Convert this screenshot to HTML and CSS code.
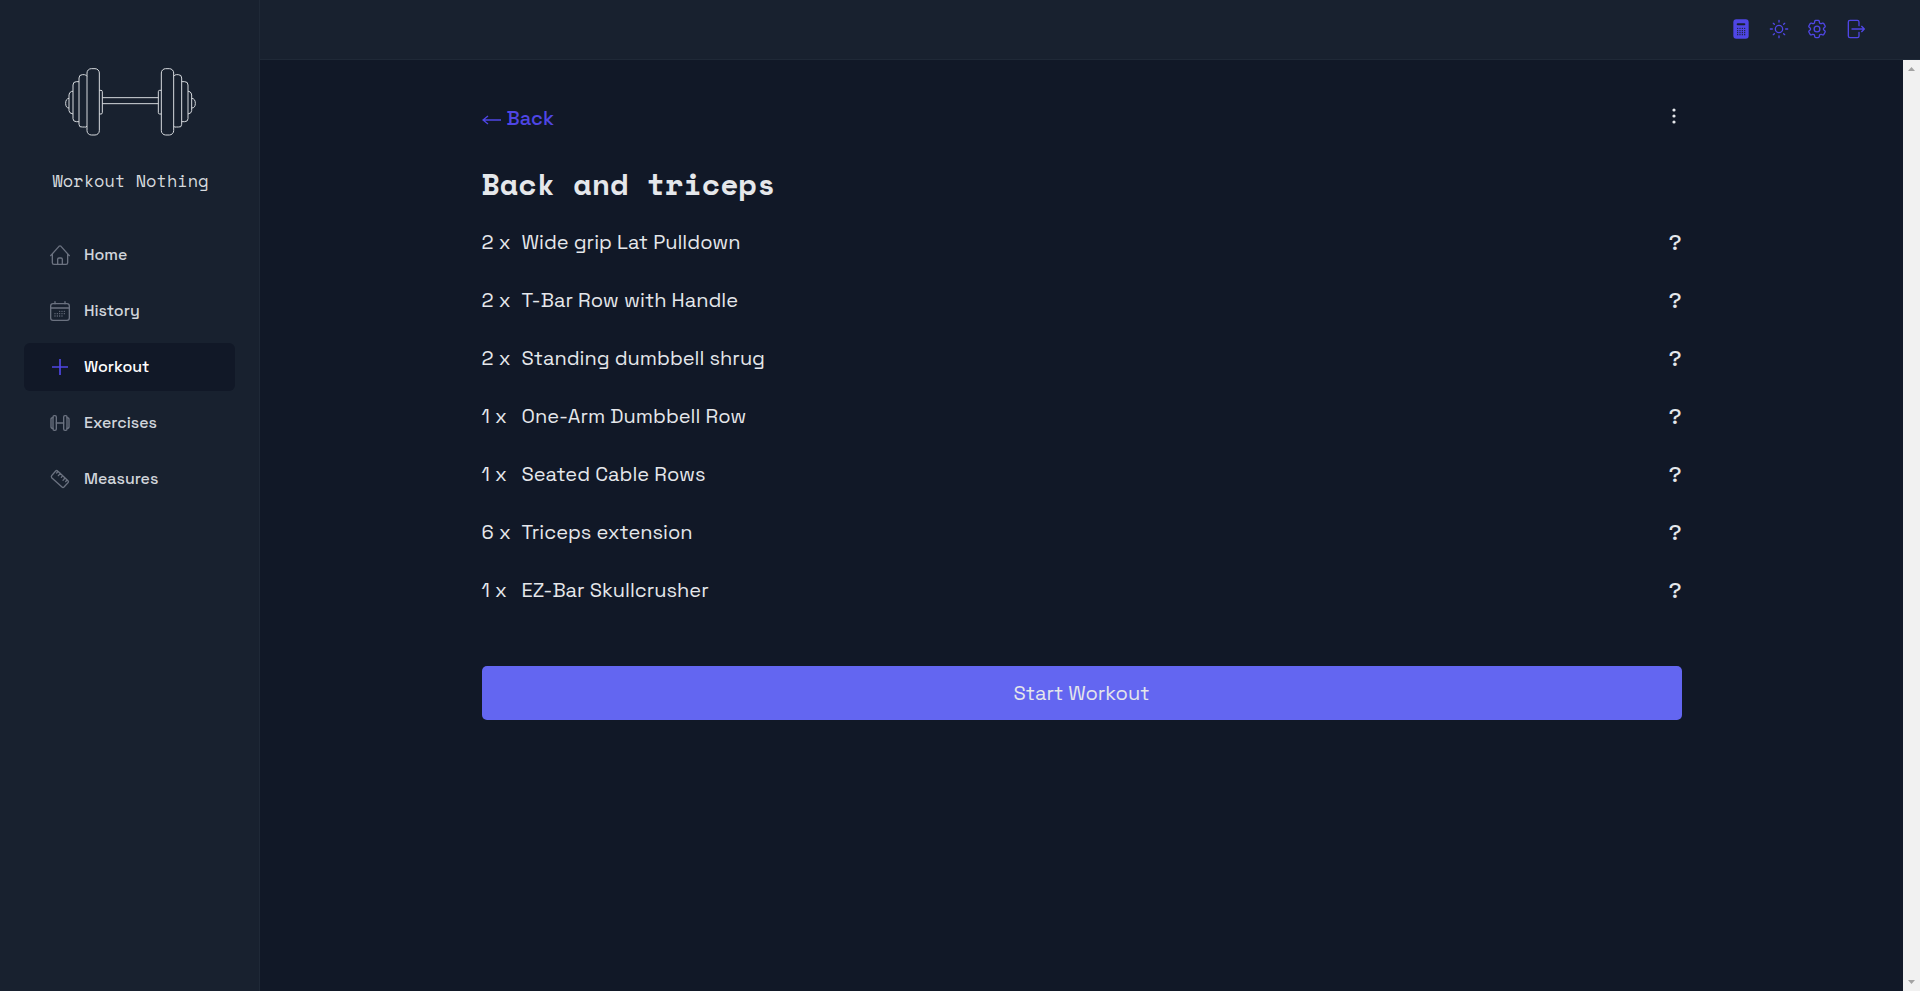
FILE: index.html
```html
<!DOCTYPE html>
<html lang="en">
<head>
<meta charset="utf-8">
<title>Workout Nothing</title>
<meta name="viewport" content="width=device-width, initial-scale=1">
<link rel="stylesheet" href="styles.css">
</head>
<body>
<div class="app">
  <aside class="sidebar">
    <div class="brand">
      <svg class="brand-logo" viewBox="196 83 393 204" aria-hidden="true">
        <rect x="262" y="85" width="37" height="199" rx="13"/>
        <path d="M262 108Q259 103 254 103H248Q238 103 238 113V252Q238 262 248 260L254 260Q259 262 262 257"/>
        <path d="M238 124H230Q220 124 220 134V235Q220 244 230 244H238"/>
        <path d="M220 153H216Q208 156 208 164V211Q208 219 220 221"/>
        <path d="M208 174Q198 175 198 189T208 203"/>
        <path d="M299 150H304Q308 150 308 154V217Q308 221 304 221H299"/>
        <path d="M308 172H476M308 190H476"/>
        <rect x="485" y="85" width="37" height="199" rx="13"/>
        <path d="M522 108Q525 103 530 103H536Q546 103 546 113V252Q546 262 536 260L530 260Q525 262 522 257"/>
        <path d="M546 124H555Q565 124 565 134V235Q565 244 555 244H546"/>
        <path d="M565 153H568Q576 156 576 164V211Q576 219 565 221"/>
        <path d="M576 174Q587 175 587 189T576 203"/>
        <path d="M485 150H480Q476 150 476 154V217Q476 221 480 221H485"/>
      </svg>
      <span class="brand-name">Workout Nothing</span>
    </div>
    <nav class="nav" aria-label="Main">
      <a class="nav-item" href="#home">
        <svg class="icon" viewBox="0 0 60 60" aria-hidden="true"><path d="M2 32 27 4Q30 1 33 4L58 32M7 27V53Q7 58 12 58H48Q53 58 53 53V27M23 58V43Q23 39 27 39H33Q37 39 37 43V58"/></svg>
        Home
      </a>
      <a class="nav-item" href="#history">
        <svg class="icon" viewBox="0 0 60 60" aria-hidden="true"><rect x="2" y="8" width="56" height="50" rx="7"/><path d="M2 21H58M15 2V8M45 2V8"/><path class="dots" d="M29 31h0M36 31h0M43 31h0M15 38h0M22 38h0M29 38h0M36 38h0M43 38h0M15 45h0M22 45h0M29 45h0M36 45h0"/></svg>
        History
      </a>
      <a class="nav-item nav-item-active" href="#workout" aria-current="page">
        <svg class="icon" viewBox="0 0 60 60" aria-hidden="true"><path class="plus" d="M30 6V54M6 30H54"/></svg>
        Workout
      </a>
      <a class="nav-item" href="#exercises">
        <svg class="icon" viewBox="0 0 60 60" aria-hidden="true"><rect x="9" y="8" width="10" height="44" rx="4"/><rect x="41" y="8" width="10" height="44" rx="4"/><path d="M9 14Q3 14 3 19V41Q3 46 9 46M51 14Q57 14 57 19V41Q57 46 51 46M19 30H41"/></svg>
        Exercises
      </a>
      <a class="nav-item" href="#measures">
        <svg class="icon" viewBox="0 0 60 60" aria-hidden="true"><path d="M5 20 17 6Q20 3 23 6L54 35Q57 38 54 41L42 54Q39 57 36 54L5 26Q3 23 5 20ZM24 7 20 12M31 13 25 20M38 20 34 25M45 27 39 34M51 33 47 38"/></svg>
        Measures
      </a>
    </nav>
  </aside>
  <div class="page">
    <header class="topbar">
      <button class="tool" type="button" aria-label="Calculator">
        <svg class="icon" viewBox="0 0 60 60" aria-hidden="true"><rect class="solid" x="7" y="1" width="46" height="58" rx="9"/><path class="slot" d="M20 16H40"/><path class="keys" d="M20 28h0M27 28h0M34 28h0M41 28h0M20 35h0M27 35h0M34 35h0M41 35h0M20 41h0M27 41h0M34 41h0M41 41h0M20 47h0M27 47h0M34 47h0M41 47h0"/></svg>
      </button>
      <button class="tool" type="button" aria-label="Toggle theme">
        <svg class="icon" viewBox="0 0 60 60" aria-hidden="true"><circle cx="30" cy="30" r="11"/><path d="M30 4V9M30 51V56M4 30H10M50 30H56M13 13 16 16M44 44 47 47M13 47 16 44M44 16 47 13"/></svg>
      </button>
      <button class="tool" type="button" aria-label="Settings">
        <svg class="icon icon-gear" viewBox="1.5 1.5 21 21" aria-hidden="true"><path d="M9.594 3.94c.09-.542.56-.94 1.11-.94h2.593c.55 0 1.02.398 1.11.94l.213 1.281c.063.374.313.686.645.87.074.04.147.083.22.127.325.196.72.257 1.075.124l1.217-.456a1.125 1.125 0 0 1 1.37.49l1.296 2.247a1.125 1.125 0 0 1-.26 1.431l-1.003.827c-.293.241-.438.613-.43.992a7.723 7.723 0 0 1 0 .255c-.008.378.137.75.43.991l1.004.827c.424.35.534.955.26 1.43l-1.298 2.247a1.125 1.125 0 0 1-1.369.491l-1.217-.456c-.355-.133-.75-.072-1.076.124a6.47 6.47 0 0 1-.22.128c-.331.183-.581.495-.644.869l-.213 1.281c-.09.543-.56.94-1.11.94h-2.594c-.55 0-1.019-.398-1.11-.94l-.213-1.281c-.062-.374-.312-.686-.644-.87a6.52 6.52 0 0 1-.22-.127c-.325-.196-.72-.257-1.076-.124l-1.217.456a1.125 1.125 0 0 1-1.369-.49l-1.297-2.247a1.125 1.125 0 0 1 .26-1.431l1.004-.827c.292-.24.437-.613.43-.991a6.932 6.932 0 0 1 0-.255c.007-.38-.138-.751-.43-.992l-1.004-.827a1.125 1.125 0 0 1-.26-1.43l1.297-2.247a1.125 1.125 0 0 1 1.37-.491l1.216.456c.356.133.751.072 1.076-.124.072-.044.146-.086.22-.128.332-.183.582-.495.644-.869l.214-1.28Z"/><circle cx="12" cy="12" r="3"/></svg>
      </button>
      <button class="tool" type="button" aria-label="Log out">
        <svg class="icon" viewBox="0 0 60 60" aria-hidden="true"><path d="M42 20V9Q42 4 37 4H15Q10 4 10 9V51Q10 56 15 56H37Q42 56 42 51V40M21 30H58M50 22 58 30 50 38"/></svg>
      </button>
    </header>
    <div class="viewport">
      <main class="content">
        <div class="content-head">
          <a class="back" href="#workouts">
            <svg class="back-arrow" viewBox="0 0 20 12" aria-hidden="true"><path d="M19 6H1M6 2 1 6 6 10"/></svg>
            Back
          </a>
          <button class="menu" type="button" aria-label="More options">
            <svg class="menu-dots" viewBox="0 0 4 16" aria-hidden="true"><circle cx="2" cy="2" r="1.6"/><circle cx="2" cy="8" r="1.6"/><circle cx="2" cy="14" r="1.6"/></svg>
          </button>
        </div>
        <h1 class="title">Back and triceps</h1>
        <ul class="exercises">
          <li class="exercise"><span class="sets">2 x</span><span class="name">Wide grip Lat Pulldown</span><button class="help" type="button">?</button></li>
          <li class="exercise"><span class="sets">2 x</span><span class="name">T-Bar Row with Handle</span><button class="help" type="button">?</button></li>
          <li class="exercise"><span class="sets">2 x</span><span class="name">Standing dumbbell shrug</span><button class="help" type="button">?</button></li>
          <li class="exercise"><span class="sets">1 x</span><span class="name">One-Arm Dumbbell Row</span><button class="help" type="button">?</button></li>
          <li class="exercise"><span class="sets">1 x</span><span class="name">Seated Cable Rows</span><button class="help" type="button">?</button></li>
          <li class="exercise"><span class="sets">6 x</span><span class="name">Triceps extension</span><button class="help" type="button">?</button></li>
          <li class="exercise"><span class="sets">1 x</span><span class="name">EZ-Bar Skullcrusher</span><button class="help" type="button">?</button></li>
        </ul>
        <button class="start" type="button">Start Workout</button>
      </main>
      <div class="scrollbar" aria-hidden="true">
        <svg class="scroll-arrow" viewBox="0 0 7 4"><path d="M0 4 3.5 0 7 4Z"/></svg>
        <svg class="scroll-arrow" viewBox="0 0 7 4"><path d="M0 0 3.5 4 7 0Z"/></svg>
      </div>
    </div>
  </div>
</div>
</body>
</html>
```
FILE: styles.css
```css
:root {
  --bg: #111827;
  --panel: #18212f;
  --line: #1f2937;
  --accent: #4f46e5;
  --text: #e5e7eb;
  --sans: "Space Grotesk", Inter, "Liberation Sans", sans-serif;
  --mono: "Space Mono", "Liberation Mono", monospace;
}

* {
  box-sizing: border-box;
}

body {
  margin: 0;
  background: var(--bg);
  color: var(--text);
  font-family: var(--sans);
  font-size: 20px;
  line-height: 28px;
}

button {
  padding: 0;
  border: 0;
  background: none;
  color: inherit;
  font: inherit;
  cursor: pointer;
}

a {
  color: inherit;
  text-decoration: none;
}

svg {
  display: block;
  flex: none;
}

.app {
  display: flex;
  min-height: 100vh;
}

.sidebar {
  flex: none;
  width: 260px;
  padding: 68px 24px 24px;
  border-right: 1px solid var(--line);
  background: var(--panel);
}

.brand {
  display: flex;
  flex-direction: column;
  align-items: center;
  gap: 31px;
  padding-left: 2px;
}

.brand-logo {
  width: 131px;
  height: 68px;
  fill: none;
  stroke: #d6dade;
  stroke-width: 3;
}

.brand-name {
  font-family: var(--mono);
  font-size: 17px;
  line-height: 28px;
  color: #d6dade;
}

.nav {
  display: flex;
  flex-direction: column;
  gap: 8px;
  margin-top: 36px;
}

.nav-item {
  display: flex;
  align-items: center;
  gap: 14px;
  height: 48px;
  padding: 0 26px;
  border-radius: 6px;
  color: #d1d5db;
  font-size: 16px;
  font-weight: 500;
}

.icon {
  width: 20px;
  height: 20px;
  fill: none;
  stroke: currentColor;
  stroke-width: 4;
  stroke-linecap: round;
  stroke-linejoin: round;
}

.nav-item .icon {
  color: #6b7280;
}

.nav-item-active {
  background: var(--bg);
  color: #fff;
}

.nav-item-active .icon {
  color: var(--accent);
}

.icon .plus {
  stroke-width: 5;
  stroke-linecap: butt;
}

.page {
  display: flex;
  flex: 1;
  flex-direction: column;
  min-width: 0;
}

.topbar {
  display: flex;
  align-items: center;
  justify-content: flex-end;
  gap: 18px;
  height: 60px;
  padding: 0 55px 2px 0;
  border-bottom: 1px solid var(--line);
  background: var(--panel);
  color: var(--accent);
}

.icon-gear {
  stroke-width: 1.4;
}

.icon .solid {
  fill: currentColor;
  stroke: none;
}

.icon .slot,
.icon .keys {
  stroke: var(--panel);
}

.icon .slot {
  stroke-width: 6;
}

.icon .keys {
  stroke-width: 4;
}

.viewport {
  display: flex;
  flex: 1;
}

.content {
  flex: 1;
  max-width: 1248px;
  margin: 0 auto;
  padding: 44px 24px;
}

.content-head {
  display: flex;
  align-items: flex-start;
  justify-content: space-between;
}

.back {
  display: flex;
  align-items: center;
  gap: 5px;
  color: var(--accent);
  font-weight: 500;
}

.back-arrow {
  width: 20px;
  height: 12px;
  margin-top: 4px;
  fill: none;
  stroke: currentColor;
  stroke-width: 1.4;
}

.menu {
  display: grid;
  place-items: center;
  width: 16px;
  height: 24px;
}

.menu-dots {
  width: 4px;
  height: 16px;
  fill: var(--text);
}

.title {
  margin: 34px 0 20px;
  font-family: var(--mono);
  font-size: 30px;
  line-height: 36px;
}

.exercises {
  display: flex;
  flex-direction: column;
  gap: 18px;
  margin: 0;
  padding: 0;
  list-style: none;
}

.exercise {
  display: flex;
  align-items: center;
  height: 40px;
}

.sets {
  width: 40px;
}

.name {
  flex: 1;
}

.help {
  font-size: 22px;
  font-weight: 500;
}

.start {
  width: 100%;
  margin-top: 56px;
  padding: 13px;
  border-radius: 5px;
  background: #6366f1;
}

.scrollbar {
  display: flex;
  flex: none;
  flex-direction: column;
  align-items: center;
  justify-content: space-between;
  width: 17px;
  padding: 7px 0;
  background: #f1f1f1;
}

.scroll-arrow {
  width: 7px;
  height: 4px;
  fill: #a3a3a3;
}
```
